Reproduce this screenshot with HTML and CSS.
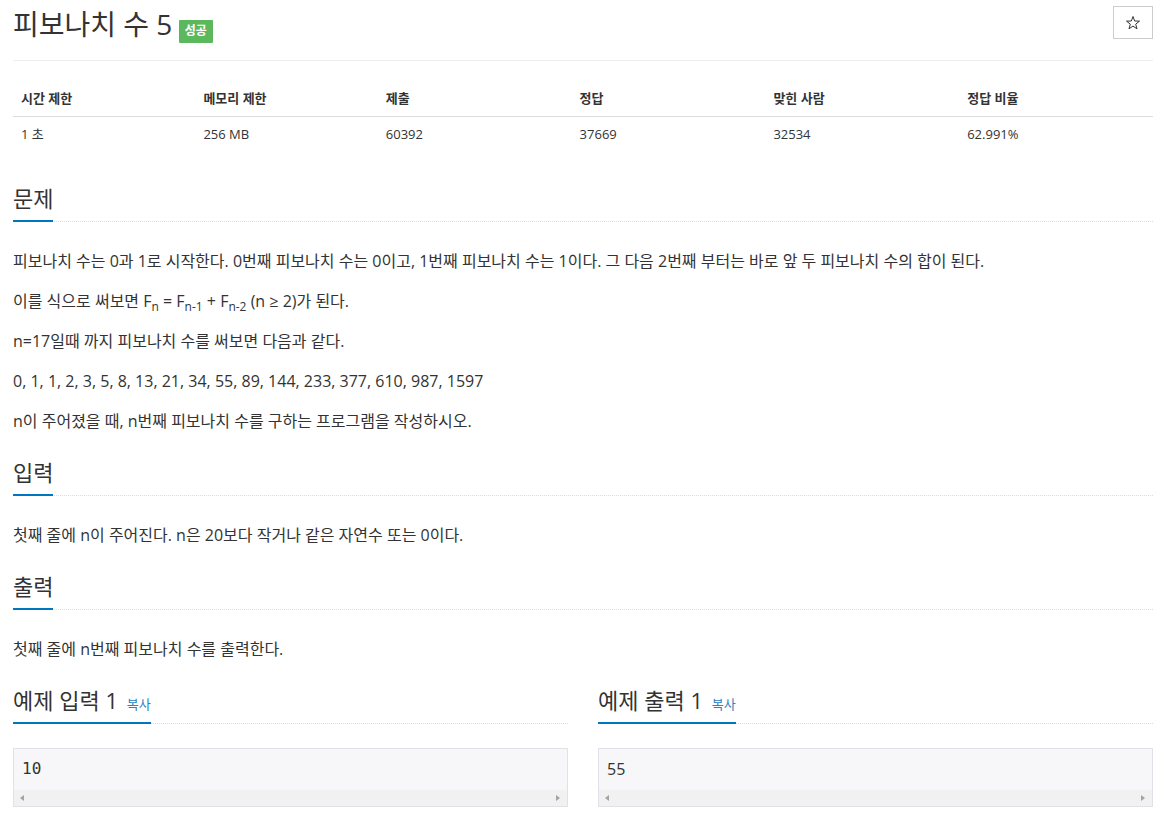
FILE: index.html
```html
<!DOCTYPE html>
<html lang="ko">
<head>
<meta charset="utf-8">
<title>피보나치 수 5</title>
<link rel="stylesheet" href="styles.css">
</head>
<body>
<div class="page">
  <header class="page-header">
    <h1 class="title">피보나치 수 5 <span class="badge">성공</span></h1>
    <button class="star-btn" type="button" aria-label="즐겨찾기">
      <svg class="star" viewBox="0 0 14 13.5" width="14" height="13.5"><polygon points="7,0.5 8.65,5 13.5,5.15 9.7,8.15 11,12.8 7,10.1 3,12.8 4.3,8.15 0.5,5.15 5.35,5" fill="none" stroke="#333" stroke-width="1" stroke-linejoin="miter"/></svg>
    </button>
  </header>

  <main class="problem">
    <table class="info">
      <colgroup>
        <col class="c16"><col class="c16"><col class="c17"><col class="c17"><col class="c17"><col class="c17">
      </colgroup>
      <thead>
        <tr><th>시간 제한</th><th>메모리 제한</th><th>제출</th><th>정답</th><th>맞힌 사람</th><th>정답 비율</th></tr>
      </thead>
      <tbody>
        <tr><td>1 초</td><td>256 MB</td><td>60392</td><td>37669</td><td>32534</td><td>62.991%</td></tr>
      </tbody>
    </table>

    <section class="section">
      <div class="headline"><h2>문제</h2></div>
      <div class="problem-text">
        <p>피보나치 수는 0과 1로 시작한다. 0번째 피보나치 수는 0이고, 1번째 피보나치 수는 1이다. 그 다음 2번째 부터는 바로 앞 두 피보나치 수의 합이 된다.</p>
        <p>이를 식으로 써보면 F<sub>n</sub> = F<sub>n-1</sub> + F<sub>n-2</sub> (n ≥ 2)가 된다.</p>
        <p>n=17일때 까지 피보나치 수를 써보면 다음과 같다.</p>
        <p>0, 1, 1, 2, 3, 5, 8, 13, 21, 34, 55, 89, 144, 233, 377, 610, 987, 1597</p>
        <p>n이 주어졌을 때, n번째 피보나치 수를 구하는 프로그램을 작성하시오.</p>
      </div>
    </section>

    <section class="section">
      <div class="headline"><h2>입력</h2></div>
      <div class="problem-text">
        <p>첫째 줄에 n이 주어진다. n은 20보다 작거나 같은 자연수 또는 0이다.</p>
      </div>
    </section>

    <section class="section">
      <div class="headline"><h2>출력</h2></div>
      <div class="problem-text">
        <p>첫째 줄에 n번째 피보나치 수를 출력한다.</p>
      </div>
    </section>

    <div class="samples">
      <section class="sample-col">
        <div class="headline"><h2>예제 입력 1 <span class="copy">복사</span></h2></div>
        <div class="sample-box">
          <pre class="sample-data mono">10</pre>
          <div class="hscroll"><span class="arrow arrow-left"></span><span class="arrow arrow-right"></span></div>
        </div>
      </section>
      <section class="sample-col">
        <div class="headline"><h2>예제 출력 1 <span class="copy">복사</span></h2></div>
        <div class="sample-box">
          <pre class="sample-data sans">55</pre>
          <div class="hscroll"><span class="arrow arrow-left"></span><span class="arrow arrow-right"></span></div>
        </div>
      </section>
    </div>
  </main>
</div>
</body>
</html>
```

FILE: styles.css
```css
* { box-sizing: border-box; }

html, body {
  margin: 0;
  padding: 0;
  background: #fff;
}

body {
  font-family: "Open Sans", "Noto Sans CJK KR", sans-serif;
  color: #333;
  font-size: 13px;
}

.page {
  width: 1140px;
  margin: 0 auto;
}

/* header */
.page-header {
  display: flex;
  justify-content: space-between;
  align-items: flex-start;
  padding-bottom: 17px;
  border-bottom: 1px solid #eee;
}

.title {
  margin: 6px 0 0;
  font-size: 28px;
  line-height: 36px;
  font-weight: 400;
  color: #333;
}

.badge {
  display: inline-block;
  margin-left: -1px;
  padding: 5.5px 6px;
  background: #5cb85c;
  color: #fff;
  font-size: 12px;
  font-weight: 700;
  line-height: 1;
  border-radius: 1px;
  vertical-align: baseline;
}

.star-btn {
  margin-top: 6px;
  width: 40px;
  height: 33px;
  padding: 0;
  border: 1px solid #ccc;
  background: #fff;
  display: flex;
  align-items: center;
  justify-content: center;
}

.star { display: block; }

/* body */
.problem {
  display: flex;
  flex-direction: column;
  gap: 14px;
}

.info {
  width: 100%;
  border-collapse: collapse;
  table-layout: fixed;
  margin: 20px 0 20px;
  font-size: 13px;
}

.c16 { width: 16%; }
.c17 { width: 17%; }

.info th,
.info td {
  padding: 8px;
  line-height: 19px;
  text-align: left;
  font-weight: 400;
}

.info th {
  font-weight: 700;
  border-bottom: 1px solid #ddd;
}

.headline {
  display: flex;
  border-bottom: 1px dotted #dcdcdc;
  margin-bottom: 24px;
}

.headline h2 {
  margin: 0 0 -1px;
  padding-bottom: 10px;
  font-size: 22px;
  line-height: 24px;
  font-weight: 400;
  color: #333;
  border-bottom: 2px solid #0076c0;
  white-space: nowrap;
}

.copy {
  font-size: 13px;
  line-height: 1;
  color: #2b7fc3;
  margin-left: 3px;
}

.problem-text p {
  margin: 0 0 10px;
  font-size: 16px;
  line-height: 30px;
}

.problem-text sub {
  font-size: 75%;
  line-height: 0;
  vertical-align: -0.3em;
}

/* samples */
.samples {
  display: grid;
  grid-template-columns: 1fr 1fr;
  column-gap: 30px;
}

.sample-box {
  border: 1px solid #e1e1e8;
  background: #f7f7f9;
}

.sample-data {
  margin: 0;
  padding: 9.5px 8px;
  font-size: 16px;
  line-height: 22px;
  color: #333;
  white-space: pre;
}

.mono { font-family: "DejaVu Sans Mono", monospace; }
.sans { font-family: "Open Sans", sans-serif; }

.hscroll {
  height: 16px;
  background: #f1f1f1;
  display: flex;
  align-items: center;
  justify-content: space-between;
  padding: 0 7px 0 6px;
}

.arrow {
  width: 0;
  height: 0;
  border-top: 3px solid transparent;
  border-bottom: 3px solid transparent;
}

.arrow-left { border-right: 4px solid #a3a3a3; }
.arrow-right { border-left: 4px solid #a3a3a3; }
```
